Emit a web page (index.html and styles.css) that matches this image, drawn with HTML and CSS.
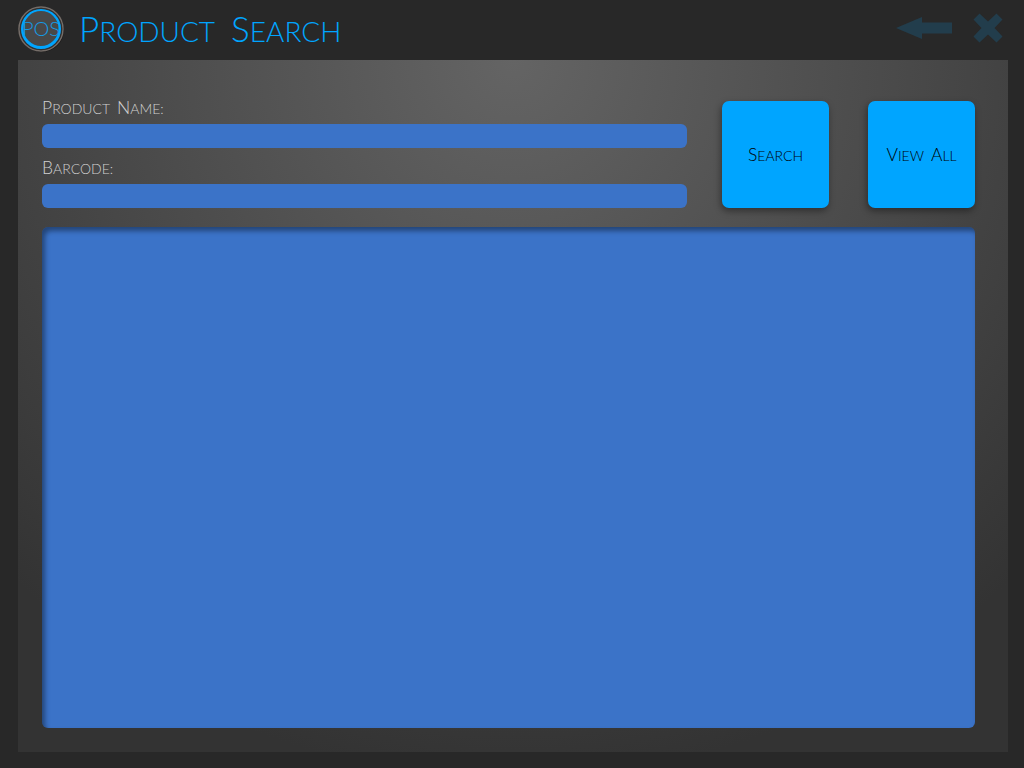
FILE: index.html
```html
<!DOCTYPE html>
<html lang="en">
<head>
<meta charset="utf-8">
<title>Product Search</title>
<link rel="stylesheet" href="styles.css">
</head>
<body>
<div class="app">
  <header class="topbar">
    <svg class="logo" viewBox="0 0 48 48" role="img" aria-label="POS">
      <circle cx="24" cy="25" r="22" fill="#151515"/>
      <circle cx="23" cy="24" r="22" fill="#484848" stroke="#756d68" stroke-width="1.500"/>
      <circle cx="23" cy="24" r="20.500" fill="none" stroke="#303030" stroke-width="1.500"/>
      <path d="M23 4a20 20 0 1 0 0 40a20 20 0 1 0 0-40zM23 6a17.500 17.500 0 1 1 0 35a17.500 17.500 0 1 1 0-35z" fill="#00a5ff"/>
      <text class="logo-text" x="23" y="31" text-anchor="middle">POS</text>
    </svg>
    <h1 class="title caps"><span class="word">Product</span> <span class="word">Search</span></h1>
    <nav class="window-actions">
      <button class="icon-button" type="button" aria-label="Back">
        <svg width="56" height="24" viewBox="0 0 56 24"><path d="M0 12L26 1V6.500H56V17.500H26V23Z" fill="#223d4c"/></svg>
      </button>
      <button class="icon-button" type="button" aria-label="Close">
        <svg width="30" height="30" viewBox="0 0 30 30"><path d="M6.500 .5L15 8.500L23.500 .5L29.500 6.500L21.500 15L29.500 23.500L23.500 29.500L15 21.500L6.500 29.500L.5 23.500L8.500 15L.5 6.500Z" fill="#223d4c"/></svg>
      </button>
    </nav>
  </header>
  <main class="panel">
    <form class="search">
      <div class="fields">
        <div class="field">
          <label class="label caps" for="name"><span class="word">Product</span> <span class="word">Name:</span></label>
          <input class="input" id="name" type="text">
        </div>
        <div class="field">
          <label class="label caps" for="barcode"><span class="word">Barcode:</span></label>
          <input class="input" id="barcode" type="text">
        </div>
      </div>
      <div class="actions">
        <button class="tile caps" type="button"><span class="word">Search</span></button>
        <button class="tile caps" type="button"><span class="word">View</span> <span class="word">All</span></button>
      </div>
    </form>
    <section class="results" aria-label="Results"></section>
  </main>
</div>
</body>
</html>
```
FILE: styles.css
```css
* { box-sizing: border-box; }

body {
  margin: 0;
  background: #282828;
  font-family: Lato, "Open Sans", sans-serif;
  font-weight: 300;
}

.app {
  display: flex;
  flex-direction: column;
  min-height: 100vh;
  padding: 0 16px 16px 18px;
}

.topbar {
  display: flex;
  align-items: center;
  height: 60px;
  padding: 0 5px 2px 0;
}

.logo { width: 48px; height: 48px; margin-right: 13px; }
.logo-text { font-size: 20px; font-weight: 300; fill: #159be6; }

/* Capitals with taller initials */
.caps {
  display: flex;
  align-items: center;
  gap: 7px;
  text-transform: uppercase;
}
.word { display: block; }
.word::first-letter { font-size: 125%; }

.title {
  gap: 16px;
  margin: 0;
  font-size: 28px;
  line-height: 40px;
  font-weight: 300;
  color: #00a5ff;
}

.window-actions {
  display: flex;
  align-items: center;
  gap: 21px;
  margin-left: auto;
  padding-bottom: 2px;
}

.icon-button {
  display: flex;
  padding: 0;
  border: 0;
  background: none;
  cursor: pointer;
}

.panel {
  flex: 1;
  display: flex;
  flex-direction: column;
  gap: 19px;
  padding: 38px 33px 24px 24px;
  background: radial-gradient(circle 720px at 50% 0, #646464, #333);
}

.search {
  display: flex;
  align-items: flex-end;
  gap: 35px;
}

.fields {
  flex: 1;
  display: flex;
  flex-direction: column;
  gap: 10px;
}

.field {
  display: flex;
  flex-direction: column;
  gap: 6px;
}

.label {
  height: 20px;
  font-size: 14px;
  line-height: 20px;
  color: #d0d0d0;
}

.input {
  width: 100%;
  height: 24px;
  padding: 0 8px;
  border: 0;
  border-radius: 6px;
  background: #3b73c8;
  color: #fff;
  font: inherit;
}

.actions { display: flex; gap: 39px; }

.tile {
  justify-content: center;
  width: 107px;
  height: 107px;
  padding: 0;
  border: 0;
  border-radius: 7px;
  background: #00a5ff;
  box-shadow: -1px 3px 7px rgba(0, 0, 0, 0.4);
  color: #000;
  font-family: inherit;
  font-size: 14px;
  font-weight: 300;
  cursor: pointer;
}

.results {
  flex: 1;
  border-radius: 6px;
  background: #3b73c8;
  box-shadow: inset 3px 4px 5px rgba(0, 0, 0, 0.4);
}
```
